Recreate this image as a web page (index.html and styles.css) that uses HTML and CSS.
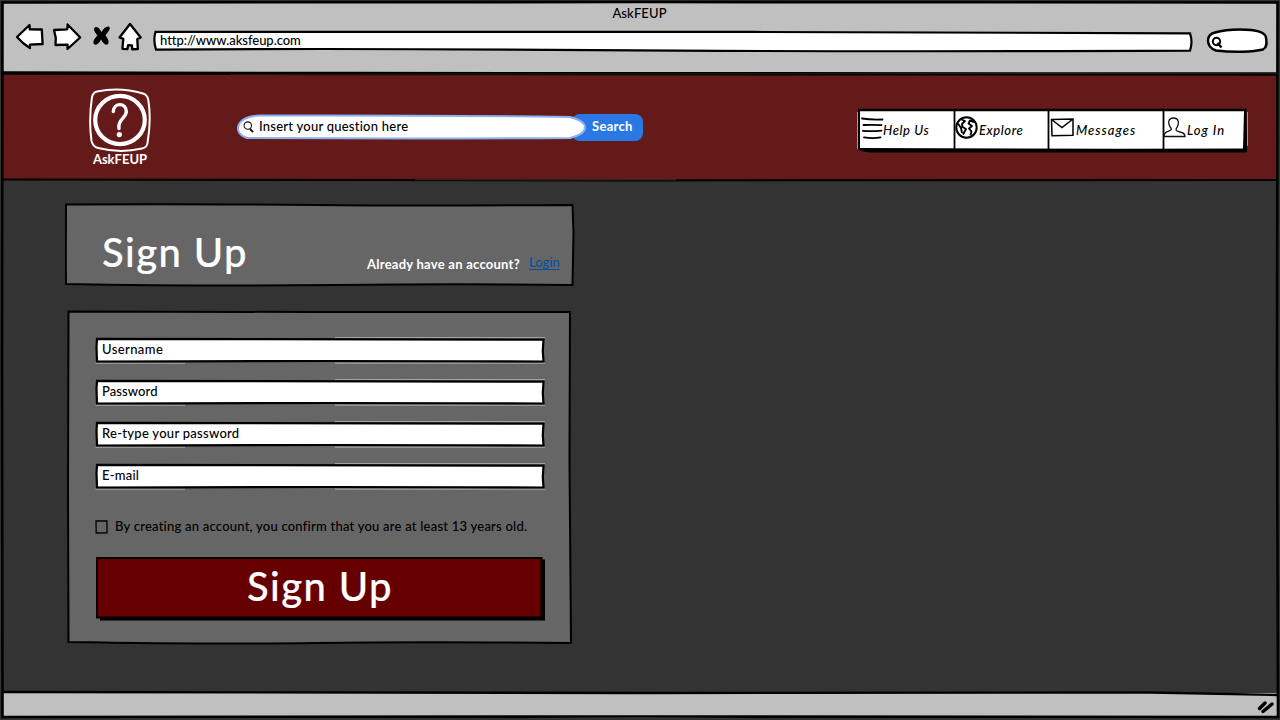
FILE: index.html
```html
<!DOCTYPE html>
<html lang="en">
<head>
<meta charset="utf-8">
<title>AskFEUP</title>
<link rel="stylesheet" href="styles.css">
</head>
<body>
<div class="window">
  <div class="chrome">
    <div class="title"><span class="t-title">AskFEUP</span></div>
    <div class="toolbar">
      <svg class="nav-icons" width="136" height="36" viewBox="10 20 136 36">
        <g fill="#fff" stroke="#000" stroke-width="2.3" stroke-linejoin="round">
          <path d="M17 37 29.500 25l.3 4.300 12 .2.8 14.500-12.700.7v3.500L23 43z"/>
          <path d="M54 30l13.300-.7.3-4.800L80.200 37.500 67.500 49v-4.300l-12 .3.300-7z"/>
          <path d="M119.500 37.500 130 24l10.700 13.500-3.400 1.500.5 10-5.500.3-.4-4-3.800-.1-.7 3.900-5-.2.900-10z"/>
        </g>
        <path d="M94.700 27.500c2-1.500 4.500.5 7 4.500 2-3.500 5-6.500 7.500-5 2 1.500-1 4.500-3.700 8.500 2.200 3 4.200 6 2.500 8.500-2.500 2-5-1-7-4.500-1.500 3-4 6-6.500 5-2.500-2-.5-5.500 3-9-2.500-3-4.500-6-2.800-8z"/>
      </svg>
      <div class="address">
        <svg class="sketch" viewBox="0 0 1040 24" preserveAspectRatio="none"><path d="M2.500 2Q330 1 600 2T1037 3.500Q1040 12 1037 21.500Q700 23 440 21T3 20.500Q0 10 2.500 2z" fill="#fff" stroke="#000" stroke-width="2.200"/></svg>
        <span class="t-url">http://www.aksfeup.com</span>
      </div>
      <svg class="quick" width="62" height="26" viewBox="1206 28 62 26"><path d="M1215 32.500q10-3 25-3c14 0 25 2 26 8 1 6 1 10-3 12-10 2.500-30 3-47 1-6-2-8-6-8-10 0-5 3-7 7-8z" fill="#fff" stroke="#000" stroke-width="2.400"/><circle cx="1216.500" cy="41.500" r="3.700" fill="none" stroke="#000" stroke-width="2"/><path d="M1217.500 43l4 4.500" stroke="#000" stroke-width="2.400"/></svg>
    </div>
  </div>

  <header class="header">
    <div class="logo">
      <svg width="64" height="66" viewBox="88 87 64 66" fill="none" stroke="#fff">
        <path d="M97 91.500Q120 86.500 143 93.500Q147.500 95 148.300 100Q151.500 120 147.500 143Q147 147.500 142 148.500Q120 153.500 98 148Q93 147 91.500 141Q88.500 120 92 97Q93 92.500 97 91.500z" stroke-width="2"/>
        <ellipse cx="120" cy="120" rx="24.800" ry="24.200" stroke-width="4.200"/>
        <path d="M113.300 111.500c.2-9 13.200-9.500 13 .3-.1 6.500-8.800 7-7.300 16.700" stroke-width="3.400" stroke-linecap="round"/>
        <circle cx="119.300" cy="134.600" r="2.600" fill="#fff" stroke="none"/>
      </svg>
      <span class="t-logo">AskFEUP</span>
    </div>
    <div class="search">
      <div class="search-box">
        <svg class="sketch" viewBox="0 0 350 26" preserveAspectRatio="none"><path d="M24 1.500Q175 1 333 3C353 8 353 19 333 24Q180 25 12 24C-2 20-1 3 24 1.500z" fill="#fff" stroke="#8ab0f0" stroke-width="2"/></svg>
        <svg class="lens" width="12" height="13" viewBox="0 0 12 13" fill="none" stroke="#111"><circle cx="4.800" cy="4.600" r="3.700" stroke-width="1.100"/><path d="M7 7.800l3 3.400" stroke-width="2"/></svg>
        <span class="t-search">Insert your question here</span>
      </div>
      <div class="search-button"><span class="t-button">Search</span></div>
    </div>
    <nav class="nav">
      <svg class="sketch" viewBox="0 0 391 46"><path d="M1 .8H389.500L390 44.500H14Q5 44 1 41z"/><path d="M3 3.300H387L386 40.500Q200 41 3 40z" fill="#fff"/><path d="M.4 4v37M390.600 4v34" stroke="#ccc" stroke-width=".8"/><path d="M97.500 2v40M191.500 2v40M306.500 1v42" stroke="#000" stroke-width="1.800"/></svg>
      <a class="nav-item help"><svg width="23" height="23" viewBox="0 0 23 23" fill="none" stroke="#000" stroke-width="1.800" stroke-linecap="round"><path d="M1 1.500Q10 3 21.500 2.500M2.500 8Q12 7.500 20.500 8.200M1.800 13.800Q11 14.500 20.500 13.600M3 20.300Q12 21.800 19.500 20.300"/></svg><span class="t-help">Help Us</span></a>
      <a class="nav-item explore"><svg width="23" height="23" viewBox="0 0 23 23" fill="none" stroke="#000" stroke-linejoin="round"><circle cx="11.500" cy="11.500" r="10.200" stroke-width="2"/><path d="M6.500 3.500 10 5 7 8l.5 3 3.500 2-3 5.500M3 7.500 6 12l1 5M19 6l-4-1.500-1.500 3L17 10l-3 2.500 2.500 3-1 4" stroke-width="1.900"/></svg><span class="t-explore">Explore</span></a>
      <a class="nav-item messages"><svg width="25" height="19" viewBox="0 0 25 19" fill="none" stroke="#000" stroke-width="1.500"><path d="M1.500 1.500 23 1v16.300l-21 .5zM1.500 1.500 12 9.500 23 1"/></svg><span class="t-messages">Messages</span></a>
      <a class="nav-item login"><svg width="23" height="21" viewBox="0 0 23 21" fill="none" stroke="#111" stroke-width="1.300"><path d="M1 19.500q0-4 4-5.200 4-1 3.200-2.800C4 6 5.500 1 10.500 1c5 0 6.500 5 2.800 10.500-.8 2 0 2.500 3.700 3.500q5 1 5 4.500z"/></svg><span class="t-login">Log In</span></a>
    </nav>
  </header>

  <main class="content">
    <section class="card heading">
      <svg class="sketch" viewBox="0 0 510 84"><path d="M1 1.500Q150 1 250 2T507.500 2L508.500 30 507.500 82Q400 80.500 270 82T1 81L.8 60z" fill="#666" stroke="#000" stroke-width="2"/></svg>
      <h1 class="t-heading">Sign Up</h1>
      <span class="t-already">Already have an account?</span>
      <a class="t-link">Login</a>
    </section>
    <form class="card form">
      <svg class="sketch" viewBox="0 0 505 335"><path d="M1.500 1.500Q150 1.500 250 2T503 2L502.500 150 504 333Q350 331.500 250 333T1.500 332L1 180z" fill="#666" stroke="#000" stroke-width="2"/></svg>
      <div class="field"><svg class="sketch" viewBox="0 0 451 27"><path d="M240 .6H450M.5 26.200H90M240 26.200H450" stroke="#bbb" stroke-width=".8"/><path d="M2 1.800Q200 2.800 448.500 2.600L447.800 14 448.500 24.500Q250 23.500 2 24.500L1.500 10z" fill="#fff" stroke="#000" stroke-width="2.200"/></svg><span class="t-user">Username</span></div>
      <div class="field"><svg class="sketch" viewBox="0 0 451 27"><path d="M240 .6H450M.5 26.200H90M240 26.200H450" stroke="#bbb" stroke-width=".8"/><path d="M2 1.800Q200 2.800 448.500 2.600L447.800 14 448.500 24.500Q250 23.500 2 24.500L1.500 10z" fill="#fff" stroke="#000" stroke-width="2.200"/></svg><span class="t-pass">Password</span></div>
      <div class="field"><svg class="sketch" viewBox="0 0 451 27"><path d="M240 .6H450M.5 26.200H90M240 26.200H450" stroke="#bbb" stroke-width=".8"/><path d="M2 1.800Q200 2.800 448.500 2.600L447.800 14 448.500 24.500Q250 23.500 2 24.500L1.500 10z" fill="#fff" stroke="#000" stroke-width="2.200"/></svg><span class="t-retype">Re-type your password</span></div>
      <div class="field"><svg class="sketch" viewBox="0 0 451 27"><path d="M240 .6H450M.5 26.200H90M240 26.200H450" stroke="#bbb" stroke-width=".8"/><path d="M2 1.800Q200 2.800 448.500 2.600L447.800 14 448.500 24.500Q250 23.500 2 24.500L1.500 10z" fill="#fff" stroke="#000" stroke-width="2.200"/></svg><span class="t-mail">E-mail</span></div>
      <div class="confirm"><svg width="13" height="14" viewBox="0 0 13 14"><path d="M1 1 12 .8v12L1.200 13z" fill="none" stroke="#000" stroke-width="1.300"/></svg><span class="t-confirm">By creating an account, you confirm that you are at least 13 years old.</span></div>
      <div class="submit"><svg class="sketch" viewBox="0 0 450 65"><path d="M5 3.500H450V64.500H5z"/><path d="M2 2H446.500V61.500H2z" fill="#600" stroke="#000" stroke-width="2"/></svg><span class="t-submit">Sign Up</span></div>
    </form>
  </main>

  <footer class="status">
    <svg width="18" height="16" viewBox="0 0 18 16" stroke="#000" stroke-width="3.400" stroke-linecap="round"><path d="M2.500 9.500 8 4M6 12.500 15 5"/></svg>
  </footer>
  <svg class="frame" viewBox="0 0 1280 720" fill="none" stroke="#000">
    <path d="M2.500 2.500 640 2 1277.500 2.500 1277 380 1278 717 640 716.500 2.500 717 2 360z" stroke-width="2.600"/>
    <path d="M2 73 340 73.500 1278 74" stroke-width="3.400"/>
    <path d="M230 74.300 1278 73.300" stroke="#333" stroke-width=".6"/>
    <path d="M2 179.500 640 180.300 1278 180" stroke-width="2.200"/>
    <path d="M415 179.800H676" stroke="#555" stroke-width=".6"/>
    <path d="M2 692 640 693 1150 692.500 1278 695" stroke-width="2.400"/>
  </svg>
</div>
</body>
</html>
```
FILE: styles.css
```css
* { box-sizing: border-box; }
body {
  margin: 0;
  background: #333;
  font: 13px/18px Lato, "Noto Sans", sans-serif;
  font-weight: 500;
  font-variant-ligatures: none;
  color: #000;
  overflow: hidden;
}
.window { position: relative; width: 1280px; height: 720px; padding: 2px; display: flex; flex-direction: column; }
.frame, .sketch { position: absolute; left: 0; top: 0; width: 100%; height: 100%; pointer-events: none; }
.sketch { z-index: 0; }
span, h1, a { white-space: nowrap; }
span, h1, .t-link { position: relative; }

.chrome { height: 71px; background: #c0c0c0; }
.title { height: 22px; text-align: center; padding: 2px 1px 0 0; }
.toolbar { display: flex; padding: 0 0 0 8px; align-items: flex-start; }
.toolbar .nav-icons { margin-top: -4px; flex: none; }
.address { position: relative; margin: 6px 13px 0 7px; width: 1040px; height: 23px; padding: 1px 0 0 7px; }
.quick { margin-top: 4px; }

.header { height: 107px; background: #651a1a; display: flex; align-items: flex-start; padding-left: 86px; }
.logo { width: 64px; padding-top: 14px; display: flex; flex-direction: column; align-items: center; color: #fff; }
.logo span { margin-top: -3px; }
.search { display: flex; margin: 41px 0 0 83px; }
.search-box { position: relative; z-index: 1; width: 352px; height: 26px; display: flex; }
.lens { position: relative; margin: 7px 4px 0 8px; }
.search-box span { margin-top: 3px; }
.search-button { width: 71px; height: 27px; margin-left: -15px; padding: 3px 0 0 20px; border-radius: 8px; background: #2b78e4; color: #fff; }
.nav { position: relative; display: flex; width: 391px; height: 46px; margin: 35px 0 0 214px; font-style: italic; }
.nav-item { position: relative; display: flex; align-items: flex-start; }
.nav-item svg { flex: none; }
.nav-item span { margin-top: 13px; }
.help { width: 97px; padding-left: 4px; }
.help svg { margin-top: 9px; }
.help span { margin-left: -1px; }
.explore { width: 95px; }
.explore svg { margin-top: 8px; margin-left: 1px; }
.explore span { margin-left: 1px; }
.messages { width: 114px; }
.messages svg { margin-top: 10px; margin-left: 1px; }
.messages span { margin-left: 1px; }
.login svg { margin-top: 9px; }
.login span { margin-left: 1px; }

.content { flex: 1; background: #333; padding: 23px 0 0 63px; }
.card { position: relative; }
.heading { width: 510px; height: 84px; display: flex; align-items: flex-start; padding-left: 37px; color: #fff; }
h1, .submit { margin: 0; font-size: 40px; line-height: 48px; font-weight: 500; -webkit-text-stroke: .2px #fff; }
h1 { margin-top: 25px; width: 265px; }
.t-already { margin-top: 52px; width: 162px; }
.t-link { margin-top: 50px; color: #0b4f9e; text-decoration: underline; text-underline-offset: 2px; }
.form { width: 505px; height: 335px; margin: 23px 0 0 2px; padding: 27px 0 0 28px; }
.field { position: relative; width: 451px; height: 27px; margin-bottom: 15px; padding: 3px 0 0 7px; }
.confirm { position: relative; display: flex; gap: 7px; margin-top: 29px; align-items: flex-start; }
.confirm svg { margin-top: 1px; }
.confirm span { margin: -2px 0 1px; }
.submit { position: relative; width: 450px; height: 65px; margin-top: 20px; padding-top: 6px; text-align: center; color: #fff; }
.status { height: 25px; background: #c0c0c0; display: flex; justify-content: flex-end; padding: 6px 3px 0 0; }

.t-title { letter-spacing: .1px; }
.t-url { letter-spacing: -.04px; }
.t-logo, .t-button, .t-already { font-weight: 700; }
.t-button { letter-spacing: .3px; }
.t-search { letter-spacing: .24px; }
.t-already { letter-spacing: .25px; }
.t-heading, .t-submit { letter-spacing: 1.4px; }
.t-user { letter-spacing: .4px; }
.t-pass { letter-spacing: .1px; }
.t-retype { letter-spacing: .28px; }
.t-mail { letter-spacing: .2px; }
.t-confirm { letter-spacing: .23px; }
.t-help, .t-explore { letter-spacing: .6px; }
.t-messages, .t-login { letter-spacing: 1px; }
```
